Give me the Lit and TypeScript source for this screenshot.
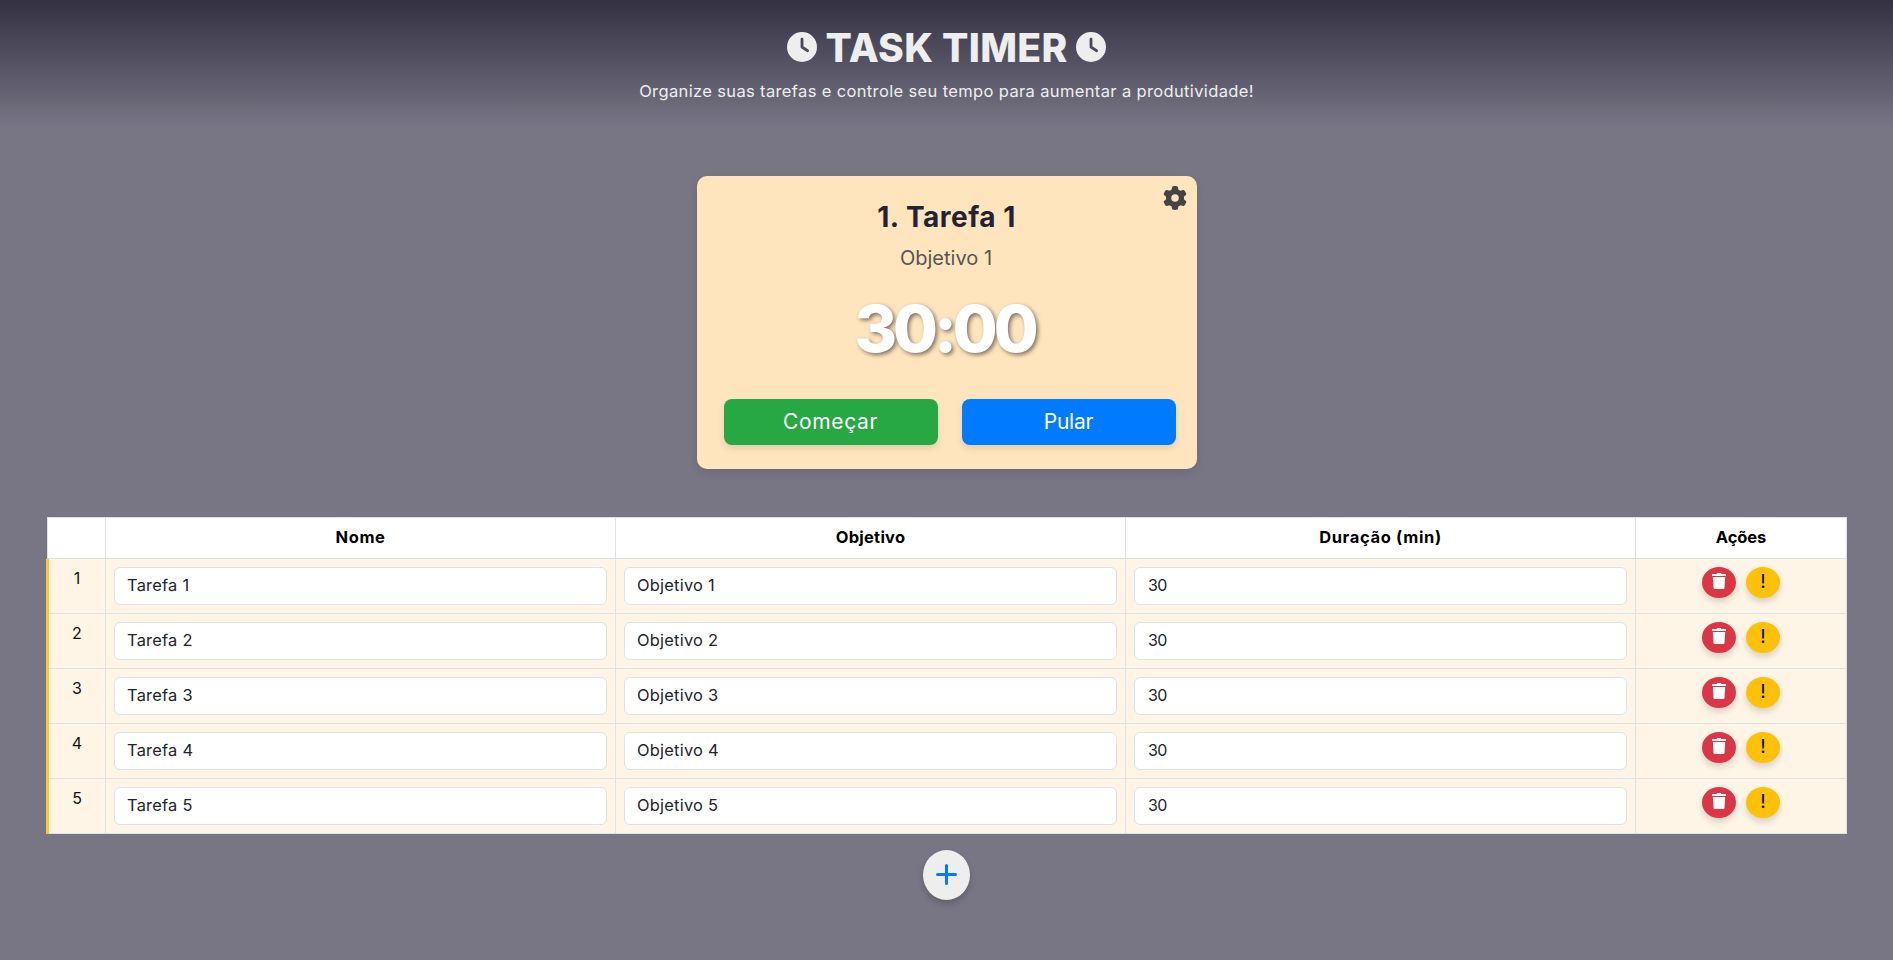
import { LitElement, html, css, svg } from "lit";
import { customElement, property, state } from "lit/decorators.js";

interface Task {
  name: string;
  goal: string;
  minutes: number;
}

const clock = html`<svg class="clock" viewBox="0 0 512 512" aria-hidden="true">
  <path d="M256 0a256 256 0 1 1 0 512A256 256 0 1 1 256 0zM232 120V256c0 8 4 15.5 10.7 20l96 64c11 7.4 25.9 4.4 33.3-6.7s4.4-25.9-6.7-33.3L280 243.2V120c0-13.3-10.7-24-24-24s-24 10.7-24 24z"/>
</svg>`;

const gear = svg`<path d="M495.9 166.6c3.2 8.7 .5 18.4-6.4 24.6l-43.3 39.4c1.1 8.3 1.7 16.8 1.7 25.4s-.6 17.1-1.7 25.4l43.3 39.4c6.9 6.2 9.6 15.9 6.4 24.6c-4.4 11.9-9.7 23.3-15.8 34.3l-4.7 8.1c-6.6 11-14 21.4-22.1 31.2c-5.9 7.2-15.7 9.6-24.5 6.8l-55.7-17.7c-13.4 10.3-28.2 18.9-44 25.4l-12.5 57.1c-2 9.1-9 16.3-18.2 17.8c-13.8 2.3-28 3.5-42.5 3.5s-28.7-1.2-42.5-3.5c-9.2-1.5-16.2-8.7-18.2-17.8l-12.5-57.1c-15.8-6.5-30.6-15.1-44-25.4L83.1 425.9c-8.8 2.8-18.6 .3-24.5-6.8c-8.1-9.8-15.5-20.2-22.1-31.2l-4.7-8.1c-6.1-11-11.4-22.4-15.8-34.3c-3.2-8.7-.5-18.4 6.4-24.6l43.3-39.4C64.6 273.1 64 264.6 64 256s.6-17.1 1.7-25.4L22.4 191.2c-6.9-6.2-9.6-15.9-6.4-24.6c4.4-11.9 9.7-23.3 15.8-34.3l4.7-8.1c6.6-11 14-21.4 22.1-31.2c5.9-7.2 15.7-9.6 24.5-6.8l55.7 17.7c13.4-10.3 28.2-18.9 44-25.4l12.5-57.1c2-9.1 9-16.3 18.2-17.8C227.3 1.2 241.5 0 256 0s28.7 1.2 42.5 3.5c9.2 1.5 16.2 8.7 18.2 17.8l12.5 57.1c15.8 6.5 30.6 15.1 44 25.4l55.7-17.7c8.8-2.8 18.6-.3 24.5 6.8c8.1 9.8 15.5 20.2 22.1 31.2l4.7 8.1c6.1 11 11.4 22.4 15.8 34.3zM256 336a80 80 0 1 0 0-160 80 80 0 1 0 0 160z"/>`;

@customElement("timer-card")
class TimerCard extends LitElement {
  @property({ attribute: false }) task!: Task;
  @property({ type: Number }) position = 1;

  static styles = css`
    :host { display: block; width: 500px; }
    .card {
      position: relative;
      box-sizing: border-box;
      height: 293px;
      padding: 20px 21px 24px 27px;
      border-radius: 10px;
      background: #ffe5be;
      box-shadow: 0 4px 8px rgba(0, 0, 0, 0.1);
      display: flex;
      flex-direction: column;
      align-items: stretch;
      text-align: center;
    }
    .gear { position: absolute; top: 10px; right: 10px; width: 24px; height: 24px; fill: #444; }
    h2 { margin: 0 6px 0 0; font-size: 28px; line-height: 42px; letter-spacing: 0.5px; color: #222233; }
    .goal { margin: 5px 7px 0 0; font-size: 20px; line-height: 30px; color: #555; }
    .time {
      margin: 8px 10px 0 0;
      font-size: 65px;
      line-height: 96px;
      font-weight: 800;
      letter-spacing: -4.1px;
      color: #fff;
      text-shadow: 2px 2px 4px rgba(0, 0, 0, 0.5);
    }
    .actions { margin-top: auto; display: grid; grid-template-columns: 214px 214px; gap: 24px; }
    button {
      height: 46px;
      border: 0;
      border-radius: 8px;
      padding: 0;
      color: #fff;
      font: 400 21px/46px Inter, sans-serif;
      box-shadow: 0 4px 6px rgba(0, 0, 0, 0.1);
    }
    .start { background: #28a745; letter-spacing: 0.65px; }
    .skip { background: #007bff; letter-spacing: -0.2px; }
  `;

  render() {
    return html`<section class="card">
      <svg class="gear" viewBox="0 0 512 512" aria-hidden="true">${gear}</svg>
      <h2>${this.position}. ${this.task.name}</h2>
      <div class="goal">${this.task.goal}</div>
      <div class="time">${this.task.minutes}:00</div>
      <div class="actions">
        <button class="start">Começar</button>
        <button class="skip">Pular</button>
      </div>
    </section>`;
  }
}

@customElement("task-table")
class TaskTable extends LitElement {
  @property({ attribute: false }) tasks: Task[] = [];

  static styles = css`
    :host { display: block; font-size: 16px; line-height: 24px; }
    .row { display: grid; grid-template-columns: 60px 510px 510px 510px 211px; }
    .head {
      grid-template-columns: 59px 510px 510px 510px 211px;
      margin-left: 1px;
      box-sizing: border-box;
      height: 42px;
      background: #fff;
      border-top: 1px solid #dee2e6;
      font-size: 16.5px;
      line-height: 22px;
      font-weight: 700;
      text-align: center;
      color: #000;
    }
    .head .cell { padding: 8px; border-bottom: 1px solid #dee2e6; }
    .head .cell:first-child { border-left: 1px solid #dee2e6; }
    .cell { box-sizing: border-box; border-right: 1px solid #dee2e6; }
    .body .cell { height: 55px; padding: 8px; border-bottom: 1px solid #dee2e6; background: #fff5e6; }
    .body .num { border-left: 3px solid #f6cd34; border-bottom: 0; padding: 0; text-align: center; color: #111; }
    .num span { display: block; box-sizing: border-box; height: 55px; padding: 7px 8px; border-bottom: 1px solid #dee2e6; }
    input {
      display: block;
      box-sizing: border-box;
      width: 100%;
      height: 38px;
      padding: 5px 12px 7px;
      border: 1px solid #dee2e6;
      border-radius: 6px;
      background: #fff;
      color: #212529;
      font: 400 16.4px/24px Inter, sans-serif;
      letter-spacing: 0.25px;
    }
    .minutes { font-size: 16px; letter-spacing: -0.7px; padding-left: 13px; }
    .tools { display: flex; justify-content: center; align-items: flex-start; gap: 10px; }
    button {
      box-sizing: border-box;
      width: 34px;
      height: 31px;
      padding: 0 0 1px;
      border: 0;
      border-radius: 50%;
      display: flex;
      justify-content: center;
      align-items: center;
      box-shadow: 0 4px 6px rgba(0, 0, 0, 0.15);
    }
    .remove { background: #dc3545; padding-bottom: 3px; }
    .alert { background: #ffc107; color: #000; font: 400 19px/28px Inter, sans-serif; }
    .bin { width: 14px; height: 16px; fill: #fff; }
    .t-nome { letter-spacing: 0.6px; }
    .t-goal { letter-spacing: 0.25px; }
    .t-time { letter-spacing: 0.65px; }
    .t-acts { letter-spacing: -0.1px; }
  `;

  render() {
    return html`
      <div class="row head">
        <div class="cell"></div>
        <div class="cell t-nome">Nome</div>
        <div class="cell t-goal">Objetivo</div>
        <div class="cell t-time">Duração (min)</div>
        <div class="cell t-acts">Ações</div>
      </div>
      ${this.tasks.map((t, i) => html`<div class="row body">
        <div class="cell num"><span>${i + 1}</span></div>
        <div class="cell"><input .value=${t.name}></div>
        <div class="cell"><input .value=${t.goal}></div>
        <div class="cell"><input class="minutes" .value=${String(t.minutes)}></div>
        <div class="cell tools">
          <button class="remove" aria-label="Remover">
            <svg class="bin" viewBox="0 0 14 16">
              <path d="M4.6 .9 5.1 .1H8.9L9.4 .9H13.5Q14 .9 14 1.4V2.9H0V1.4Q0 .9 .5 .9ZM.8 4H13.2L12.5 15Q12.4 16 11.4 16H2.6Q1.6 16 1.5 15Z"/>
            </svg>
          </button>
          <button class="alert">!</button>
        </div>
      </div>`)}
    `;
  }
}

@customElement("app-root")
class AppRoot extends LitElement {
  @state() private tasks: Task[] = [1, 2, 3, 4, 5].map((n) => ({
    name: `Tarefa ${n}`,
    goal: `Objetivo ${n}`,
    minutes: 30,
  }));

  static styles = css`
    :host {
      display: flex;
      flex-direction: column;
      box-sizing: border-box;
      height: 960px;
      overflow: hidden;
      background: #787685;
      font-family: Inter, sans-serif;
      color: #eee;
    }
    header {
      box-sizing: border-box;
      height: 128px;
      padding-top: 17px;
      background: linear-gradient(#333142, #787685);
      text-align: center;
    }
    h1 {
      margin: 0;
      display: flex;
      justify-content: center;
      align-items: center;
      gap: 8px;
      height: 60px;
      font-size: 39px;
      line-height: 60px;
    }
    h1 span { padding-top: 1px; font-weight: 800; letter-spacing: 0.3px; }
    .clock { width: 30px; height: 30px; fill: #eee; }
    .lead { margin: 2px 0 0; font-size: 16.5px; line-height: 24px; letter-spacing: 0.36px; }
    main { display: flex; flex-direction: column; align-items: center; padding-top: 48px; }
    task-table { margin-top: 48px; width: 1801px; }
    .add {
      margin-top: 16px;
      width: 47px;
      height: 50px;
      padding: 0 0 1px;
      border: 0;
      border-radius: 50%;
      background: #eee;
      display: flex;
      align-items: center;
      justify-content: center;
      box-shadow: 0 4px 6px rgba(0, 0, 0, 0.2);
    }
    .plus { width: 21px; height: 21px; stroke: #007bff; stroke-width: 3; stroke-linecap: round; }
  `;

  render() {
    return html`
      <header>
        <h1>${clock}<span>TASK TIMER</span>${clock}</h1>
        <p class="lead">Organize suas tarefas e controle seu tempo para aumentar a produtividade!</p>
      </header>
      <main>
        <timer-card .task=${this.tasks[0]} .position=${1}></timer-card>
        <task-table .tasks=${this.tasks}></task-table>
        <button class="add" aria-label="Adicionar">
          <svg class="plus" viewBox="0 0 21 21"><path d="M10.5 1.5V19.5M1.5 10.5H19.5"/></svg>
        </button>
      </main>
    `;
  }
}
